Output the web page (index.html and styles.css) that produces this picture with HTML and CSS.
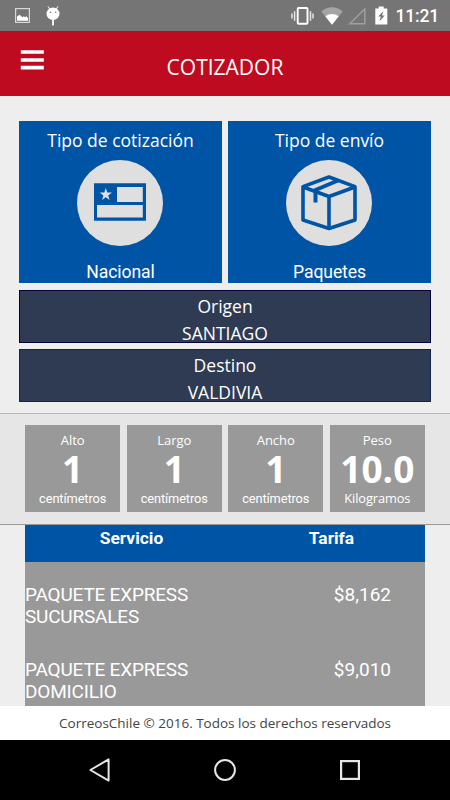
FILE: index.html
```html
<!DOCTYPE html>
<html lang="es">
  <head>
    <meta charset="UTF-8" />
    <meta name="viewport" content="width=device-width, initial-scale=1.0" />
    <title>Cotizador</title>
    <link rel="stylesheet" href="styles.css">
  </head>
  <body>
    <div class="statusbar">
      <svg class="icon-picture" width="15" height="15" viewBox="0 0 15 15">
        <rect x="0.6" y="0.6" width="13.8" height="13.8" fill="none" stroke="#d8d8d8" stroke-width="1.2" />
        <path d="M2 12.7V8.6L4.7 6.8 7.3 9.2 8.8 8.2 10 9.2 11.2 8.3 13 10V12.7Z" fill="#fff" />
      </svg>
      <svg class="icon-android" width="14" height="20" viewBox="0 0 14 20">
        <path d="M2 0.3L4 3.6M12 0.3L10 3.6" stroke="#fff" stroke-width="1" />
        <ellipse cx="7" cy="7.8" rx="6.5" ry="6.2" fill="#fff" />
        <path d="M7 14V19.5" stroke="#fff" stroke-width="1.8" />
        <circle cx="4.3" cy="6.2" r="0.8" fill="#757575" />
        <circle cx="9.7" cy="6.2" r="0.8" fill="#757575" />
      </svg>
      <div class="status-right">
        <svg class="icon-vibrate" width="23" height="18" viewBox="0 0 23 18">
          <rect x="6.7" y="1" width="9.8" height="15.7" rx="1" fill="none" stroke="#fff" stroke-width="1.9" />
          <path d="M3.6 4.3V13.7M19.5 4.3V13.7M1 6.5V11.5M22 6.5V11.5" stroke="#e4e4e4" stroke-width="1.5" />
        </svg>
        <svg class="icon-wifi" width="22" height="18" viewBox="0 0 22 18">
          <path d="M0.3 4.4Q11 -3.7 21.7 4.4L11 17.7Z" fill="#a5a5a5" />
          <path d="M4.3 9.3Q11 4.6 17.7 9.3L11 17.7Z" fill="#fff" />
        </svg>
        <svg class="icon-signal" width="18" height="18" viewBox="0 0 18 18">
          <path d="M16.8 1.9V16.8H1.6Z" fill="none" stroke="#a1a1a1" stroke-width="1.4" />
        </svg>
        <svg class="icon-battery" width="13" height="19" viewBox="0 0 13 19">
          <path d="M0.3 2.5H3.7V0.5H8.7V2.5H12.3V18.5H0.3Z" fill="#fff" />
          <path d="M8.4 5L3.2 10.6H5.8L4.4 15.5L9.7 9.5H7Z" fill="#757575" />
        </svg>
        <span class="clock">11:21</span>
      </div>
    </div>

    <header class="header">
      <svg class="menu" width="24" height="20" viewBox="0 0 24 20">
        <path d="M0.8 2H23.8M0.8 10H23.8M0.8 17.6H23.8" stroke="#fff" stroke-width="3.7" />
      </svg>
      <h1 class="title">COTIZADOR</h1>
    </header>

    <main class="main">
      <div class="options">
        <div class="card">
          <div class="card-title">Tipo de cotización</div>
          <div class="circle">
            <svg width="86" height="86" viewBox="0 0 86 86">
              <path d="M17 23.3H69V60.8H17Z" fill="#0054a6" />
              <path d="M40 27H65.8V42H40ZM20 45H65.8V57.4H20Z" fill="#dfdfdf" />
              <path d="M28.8 28L30.3 32.6H34.9L31.2 35.4L32.6 40L28.8 37.2L25 40L26.4 35.4L22.7 32.6H27.3Z" fill="#dfdfdf" />
            </svg>
          </div>
          <div class="card-value">Nacional</div>
        </div>
        <div class="card">
          <div class="card-title">Tipo de envío</div>
          <div class="circle">
            <svg width="86" height="86" viewBox="0 0 86 86" fill="none" stroke="#0054a6" stroke-width="3.6" stroke-linejoin="round">
              <path d="M43 17L69 26.6V60L43 68.5L17 60V26.6Z" />
              <path d="M17 27L43 36.5L69 27M43 36.5V68" />
              <path d="M52 20.5L29.5 30V42.4" stroke-width="4" stroke-linejoin="miter" />
            </svg>
          </div>
          <div class="card-value">Paquetes</div>
        </div>
      </div>
      <div class="place">
        <div>Origen</div>
        <div>SANTIAGO</div>
      </div>
      <div class="place destino">
        <div>Destino</div>
        <div>VALDIVIA</div>
      </div>
    </main>

    <section class="measures">
      <div class="measure">
        <div class="label">Alto</div>
        <div class="number">1</div>
        <div class="unit">centímetros</div>
      </div>
      <div class="measure">
        <div class="label">Largo</div>
        <div class="number">1</div>
        <div class="unit">centímetros</div>
      </div>
      <div class="measure">
        <div class="label">Ancho</div>
        <div class="number">1</div>
        <div class="unit">centímetros</div>
      </div>
      <div class="measure">
        <div class="label">Peso</div>
        <div class="number">10.0</div>
        <div class="unit kilos">Kilogramos</div>
      </div>
    </section>

    <section class="results">
      <div class="results-head">
        <div class="servicio">Servicio</div>
        <div class="tarifa">Tarifa</div>
      </div>
      <div class="row">
        <div class="name">PAQUETE EXPRESS<br>SUCURSALES</div>
        <div class="price">$8,162</div>
      </div>
      <div class="row">
        <div class="name">PAQUETE EXPRESS<br>DOMICILIO</div>
        <div class="price">$9,010</div>
      </div>
    </section>

    <footer class="footer">CorreosChile © 2016. Todos los derechos reservados</footer>

    <nav class="navbar">
      <svg width="22" height="24" viewBox="0 0 22 24">
        <path d="M19.6 1.4V22.6L1.4 12Z" fill="none" stroke="#e6e6e6" stroke-width="2" stroke-linejoin="round" />
      </svg>
      <svg width="22" height="24" viewBox="0 0 22 24">
        <circle cx="11" cy="12" r="9.9" fill="none" stroke="#e6e6e6" stroke-width="2" />
      </svg>
      <svg width="22" height="24" viewBox="0 0 22 24">
        <rect x="2.1" y="3.1" width="17.8" height="17.8" fill="none" stroke="#e6e6e6" stroke-width="2.2" />
      </svg>
    </nav>
  </body>
</html>
```

FILE: styles.css
```css
* {
  box-sizing: border-box;
}

body {
  margin: 0;
  width: 450px;
  height: 800px;
  overflow: hidden;
  display: flex;
  flex-direction: column;
  background-color: #eee;
  color: #fff;
  font-family: "Open Sans", sans-serif;
}

svg {
  display: block;
  flex-shrink: 0;
}

.statusbar {
  height: 31px;
  flex-shrink: 0;
  display: flex;
  align-items: flex-start;
  padding: 6px 11px 0 15px;
  background-color: #757575;
}

.icon-picture {
  margin-top: 2px;
}

.icon-android {
  margin-left: 16px;
}

.status-right {
  margin-left: auto;
  display: flex;
}

.icon-vibrate {
  margin-top: 1px;
}

.icon-wifi {
  margin: 1px 0 0 7px;
}

.icon-signal {
  margin: 1px 0 0 5px;
}

.icon-battery {
  margin-left: 9px;
}

.clock {
  margin-left: 8px;
  font: 500 17.5px/21px Roboto, sans-serif;
  letter-spacing: -0.2px;
}

.header {
  height: 65px;
  flex-shrink: 0;
  display: flex;
  background-color: #bf0b20;
}

.menu {
  margin: 19px 0 0 20px;
}

.title {
  flex: 1;
  margin: 7px 44px 0 0;
  font-size: 21px;
  font-weight: 400;
  line-height: 58px;
  text-align: center;
}

.main {
  height: 317px;
  flex-shrink: 0;
  padding: 25.4px 19px 0;
}

.options {
  display: flex;
  gap: 6px;
  margin-bottom: 6.5px;
}

.card {
  flex: 1;
  height: 162px;
  display: flex;
  flex-direction: column;
  align-items: center;
  background-color: #0054a6;
}

.card-title {
  height: 39px;
  font-size: 17.5px;
  line-height: 39px;
}

.circle {
  width: 86px;
  height: 86px;
  margin-right: 0.4px;
  border-radius: 50%;
  background-color: #dfdfdf;
}

.card-value {
  margin-top: 16px;
  font: 17.6px/21px Roboto, sans-serif;
  letter-spacing: -0.1px;
}

.place {
  height: 53px;
  padding-top: 2px;
  border: 1px solid #020239;
  background-color: #2e3b52;
  font-size: 17.5px;
  line-height: 27px;
  text-align: center;
}

.destino {
  margin-top: 6px;
  border-color: #12244a;
}

.measures {
  height: 112px;
  flex-shrink: 0;
  display: flex;
  gap: 6.2px;
  padding: 11px 25px;
  border-top: 1px solid #b9b9b9;
  border-bottom: 1px solid #999;
  background-color: #e6e6e6;
}

.measure {
  flex: 1;
  height: 87.4px;
  padding-top: 6px;
  background-color: #999;
  text-align: center;
}

.label {
  font-size: 13px;
  line-height: 18px;
}

.number {
  font-size: 37px;
  font-weight: 700;
  line-height: 40px;
}

.unit {
  font: 12.8px/19px Roboto, sans-serif;
  letter-spacing: -0.1px;
}

.kilos {
  font: 12.8px/19px "Open Sans", sans-serif;
}

.results {
  height: 181px;
  flex-shrink: 0;
  margin: 0 25px;
  background-color: #999;
  font-family: Roboto, sans-serif;
}

.results-head {
  height: 37px;
  display: flex;
  background-color: #0054a6;
  font-size: 17.4px;
  font-weight: 700;
  line-height: 26px;
  text-align: center;
}

.servicio {
  width: 213px;
}

.tarifa {
  width: 187px;
}

.row {
  height: 75px;
  display: flex;
  justify-content: space-between;
  padding: 21.5px 34px 0 0;
  font-size: 19px;
  line-height: 22px;
}

.name {
  letter-spacing: -0.2px;
}

.footer {
  height: 34px;
  flex-shrink: 0;
  background-color: #fff;
  color: #444;
  font-size: 13.5px;
  line-height: 35px;
  text-align: center;
}

.navbar {
  height: 60px;
  flex-shrink: 0;
  display: flex;
  justify-content: center;
  align-items: center;
  gap: 103px;
  background-color: #000;
}
```
